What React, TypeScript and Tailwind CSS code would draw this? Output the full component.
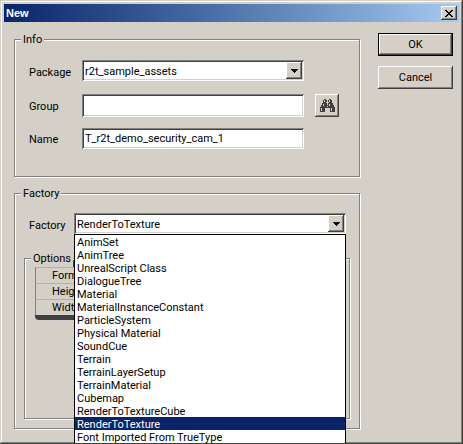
import { useState } from 'react';
import type { ReactNode } from 'react';

const factories = [
  'AnimSet',
  'AnimTree',
  'UnrealScript Class',
  'DialogueTree',
  'Material',
  'MaterialInstanceConstant',
  'ParticleSystem',
  'Physical Material',
  'SoundCue',
  'Terrain',
  'TerrainLayerSetup',
  'TerrainMaterial',
  'Cubemap',
  'RenderToTextureCube',
  'RenderToTexture',
  'Font Imported From TrueType',
];

const raised =
  'bg-[#d4d0c8] shadow-[inset_-1px_-1px_0_#404040,inset_1px_1px_0_#fff,inset_-2px_-2px_0_#808080]';
const sunken =
  'w-full appearance-none bg-white pl-[3px] pr-5 text-black outline-none shadow-[inset_1px_1px_0_#808080,inset_-1px_-1px_0_#fff,inset_2px_2px_0_#404040,inset_-2px_-2px_0_#d4d0c8]';

function Group({ title, children }: { title: string; children: ReactNode }) {
  return (
    <fieldset className="min-w-0 border border-[#808080] shadow-[1px_1px_0_#fff,inset_1px_1px_0_#fff]">
      <legend className="relative ml-[6px] bg-[#d4d0c8] px-[2px] shadow-[0_2px_0_#d4d0c8]">{title}</legend>
      {children}
    </fieldset>
  );
}

function Combo({ id, value, options, onChange }: {
  id: string;
  value: string;
  options: string[];
  onChange: (v: string) => void;
}) {
  return (
    <div className="relative min-w-0 flex-1 self-start">
      <select id={id} className={`h-[21px] pt-px ${sunken}`} value={value} onChange={(e) => onChange(e.target.value)}>
        {options.map((o) => (
          <option key={o}>{o}</option>
        ))}
      </select>
      <span
        className={`pointer-events-none absolute right-[2px] top-[2px] flex h-[17px] w-4 items-center justify-center ${raised}`}
      >
        <svg width="7" height="4" viewBox="0 0 7 4" shapeRendering="crispEdges" aria-hidden="true">
          <path d="M0 0h7v1H0zM1 1h5v1H1zM2 2h3v1H2zM3 3h1v1H3z" />
        </svg>
      </span>
    </div>
  );
}

function Binoculars() {
  return (
    <svg width="15" height="13" viewBox="0 0 15 13" shapeRendering="crispEdges" aria-hidden="true">
      <path
        fill="#404040"
        d="M4 0h2v1H4zM9 0h2v1H9zM3 1h4v2H3zM8 1h4v2H8zM3 3h3v1H3zM9 3h3v1H9zM2 4h11v2H2zM1 6h13v2H1zM0 8h6v1H0zM9 8h6v1H9zM0 9h5v4H0zM10 9h5v4h-5zM6 8h3v1H6z"
      />
      <path
        fill="#d4d0c8"
        d="M4 1h1v2H4zM9 1h1v2H9zM3 5h1v2H3zM9 5h1v2H9zM7 4h1v2H7zM7 7h1v1H7zM1 9h1v3H1zM11 9h1v3h-1z"
      />
    </svg>
  );
}

export default function App() {
  const [pkg, setPkg] = useState('r2t_sample_assets');
  const [factory, setFactory] = useState('RenderToTexture');

  return (
    <main className="flex min-h-screen flex-col bg-[#d4d0c8] p-1 font-[Roboto,'Liberation_Sans',sans-serif] text-[11px] leading-[13px] text-black shadow-[inset_-1px_-1px_0_#404040,inset_1px_1px_0_#d4d0c8,inset_-2px_-2px_0_#808080,inset_2px_2px_0_#fff]">
      <header className="flex h-[18px] items-center justify-between bg-linear-to-r from-[#0a246a] to-[#a6caf0] px-[2px]">
        <h1 className="font-['Liberation_Sans',Arial,sans-serif] font-bold text-white">New</h1>
        <button type="button" aria-label="Close" className={`flex h-[14px] w-4 items-center justify-center ${raised}`}>
          <svg width="8" height="7" viewBox="0 0 8 7" shapeRendering="crispEdges" aria-hidden="true">
            <path d="M0 0h2v1H0zM6 0h2v1H6zM1 1h2v1H1zM5 1h2v1H5zM2 2h4v1H2zM3 3h2v1H3zM2 4h4v1H2zM1 5h2v1H1zM5 5h2v1H5zM0 6h2v1H0zM6 6h2v1H6z" />
          </svg>
        </button>
      </header>

      <form className="flex gap-[18px] pl-[10px] pr-[6px] pt-[11px]" onSubmit={(e) => e.preventDefault()}>
        <div className="flex min-w-0 flex-1 flex-col gap-[10px]">
          <Group title="Info">
            <div className="grid gap-[11px] pb-[25px] pl-[14px] pr-[20px] pt-[14px]">
              <div className="flex h-[23px] items-center pr-[35px]">
                <label htmlFor="package" className="w-[53px] pt-[2px]">Package</label>
                <Combo id="package" value={pkg} options={['r2t_sample_assets']} onChange={setPkg} />
              </div>
              <div className="flex h-[23px] items-center">
                <label htmlFor="group" className="w-[53px] pt-[2px]">Group</label>
                <div className="flex min-w-0 flex-1 gap-[11px]">
                  <input id="group" type="text" className={`h-[23px] ${sunken}`} />
                  <button
                    type="button"
                    aria-label="Browse groups"
                    className={`flex h-[23px] w-6 shrink-0 items-center justify-center ${raised}`}
                  >
                    <Binoculars />
                  </button>
                </div>
              </div>
              <div className="flex h-[23px] items-center pr-[35px]">
                <label htmlFor="name" className="w-[53px]">Name</label>
                <div className="min-w-0 flex-1 self-start">
                  <input id="name" type="text" className={`h-[21px] ${sunken}`} defaultValue="T_r2t_demo_security_cam_1" />
                </div>
              </div>
            </div>
          </Group>

          <Group title="Factory">
            <div className="px-[9px] pb-[9px]">
              <div className="flex items-center pl-[5px] pr-1 pt-[13px]">
                <label htmlFor="factory" className="w-[45px] pt-[4px]">Factory</label>
                <div className="relative flex min-w-0 flex-1">
                  <Combo id="factory" value={factory} options={factories} onChange={setFactory} />
                  <ul
                    role="listbox"
                    aria-label="Factory types"
                    className="absolute inset-x-0 top-full z-10 overflow-hidden border-x border-t border-black bg-white"
                  >
                    {factories.map((f) => (
                      <li
                        key={f}
                        role="option"
                        aria-selected={f === factory}
                        onClick={() => setFactory(f)}
                        className={`h-[13px] whitespace-nowrap pl-[2px] leading-[16px] ${f === factory ? 'bg-[#0a246a] text-white' : ''}`}
                      >
                        {f}
                      </li>
                    ))}
                  </ul>
                </div>
              </div>
              <div className="pt-[18px]">
                <Group title="Options">
                  <div className="px-[10px] pb-[98px]">
                    <div className="-mt-[5px] rounded-bl-[4px] border-b-[5px] border-t-[7px] border-[#404040]">
                      {['Format', 'Height', 'Width'].map((p) => (
                        <div
                          key={p}
                          className="h-4 border-l border-t border-l-[#808080] border-t-[#b4b0a8] bg-[#d4d0c8] pl-4 leading-[16px]"
                        >
                          {p}
                        </div>
                      ))}
                    </div>
                  </div>
                </Group>
              </div>
            </div>
          </Group>
        </div>

        <div className="flex w-[75px] shrink-0 flex-col gap-[10px]">
          <button
            type="submit"
            className="h-[23px] bg-[#d4d0c8] shadow-[inset_0_0_0_1px_#000,inset_-2px_-2px_0_#404040,inset_2px_2px_0_#fff,inset_-3px_-3px_0_#808080]"
          >
            OK
          </button>
          <button type="button" className={`h-[23px] ${raised}`}>
            Cancel
          </button>
        </div>
      </form>
    </main>
  );
}
